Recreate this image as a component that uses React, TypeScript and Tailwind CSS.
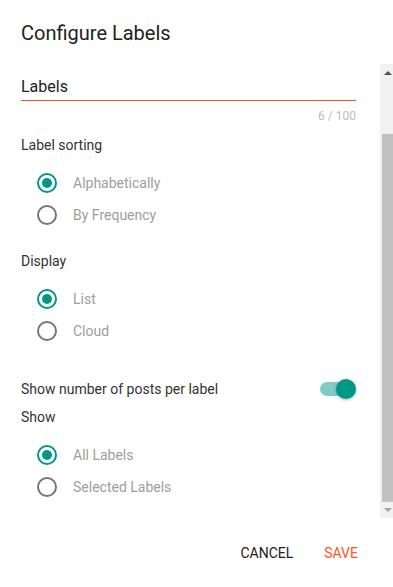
import React, { useState } from 'react';

const font = { fontFamily: 'Roboto, "Noto Sans", Arial, sans-serif' };

type RadioProps = { label: string; checked: boolean; onClick: () => void };

const Radio = ({ label, checked, onClick }: RadioProps) => (
  <button onClick={onClick} className="flex items-center h-[32px] pl-[16px] text-left cursor-pointer">
    <span
      className={`flex items-center justify-center w-[20px] h-[20px] rounded-full border-2 ${
        checked ? 'border-[#009688]' : 'border-[#757575]'
      }`}
    >
      {checked && <span className="w-[10px] h-[10px] rounded-full bg-[#009688]" />}
    </span>
    <span className="ml-[16px] text-[14px] leading-[20px] text-[#9e9e9e]">{label}</span>
  </button>
);

export default function App() {
  const [sorting, setSorting] = useState('alpha');
  const [display, setDisplay] = useState('list');
  const [show, setShow] = useState('all');
  const [counts, setCounts] = useState(true);

  return (
    <div style={font} className="w-[393px] h-[587px] bg-white flex flex-col overflow-hidden">
      <h1 className="pt-[21px] px-[21px] text-[20px] leading-[24px] font-normal text-[#212121]">Configure Labels</h1>

      <div className="mt-[17px] h-[458px] flex">
        <div className="flex-1 overflow-hidden pl-[21px] pr-[24px]">
          <div className="-mt-[10px] flex flex-col">
            <label className="text-[12px] leading-[12px] text-[#bdbdbd]">Title</label>
            <div className="mt-[11px] pb-[1px] border-b border-[#e8562a] text-[16px] leading-[24px] text-[#212121]">Labels</div>
            <div className="mt-[7px] text-right text-[12px] leading-[16px] text-[#bdbdbd]">6 / 100</div>

            <div className="mt-[11px] text-[14px] leading-[20px] text-[#333333]">Label sorting</div>
            <div className="mt-[12px] flex flex-col">
              <Radio label="Alphabetically" checked={sorting === 'alpha'} onClick={() => setSorting('alpha')} />
              <Radio label="By Frequency" checked={sorting === 'freq'} onClick={() => setSorting('freq')} />
            </div>

            <div className="mt-[20px] text-[14px] leading-[20px] text-[#333333]">Display</div>
            <div className="mt-[12px] flex flex-col">
              <Radio label="List" checked={display === 'list'} onClick={() => setDisplay('list')} />
              <Radio label="Cloud" checked={display === 'cloud'} onClick={() => setDisplay('cloud')} />
            </div>

            <div className="mt-[32px] flex items-center justify-between h-[20px]">
              <span className="text-[14px] leading-[20px] text-[#333333]">Show number of posts per label</span>
              <button
                onClick={() => setCounts((v) => !v)}
                className="relative w-[37px] h-[20px] flex items-center cursor-pointer"
              >
                <span className={`ml-[1px] w-[34px] h-[14px] rounded-full ${counts ? 'bg-[#80cbc4]' : 'bg-[#bdbdbd]'}`} />
                <span
                  className={`absolute top-0 w-[20px] h-[20px] rounded-full shadow-[0_1px_3px_rgba(0,0,0,0.3)] ${
                    counts ? 'right-0 bg-[#009688]' : 'left-0 bg-[#fafafa]'
                  }`}
                />
              </button>
            </div>

            <div className="mt-[8px] text-[14px] leading-[20px] text-[#333333]">Show</div>
            <div className="mt-[12px] flex flex-col">
              <Radio label="All Labels" checked={show === 'all'} onClick={() => setShow('all')} />
              <Radio label="Selected Labels" checked={show === 'selected'} onClick={() => setShow('selected')} />
            </div>
          </div>
        </div>

        {/* scrollbar */}
        <div className="mt-[2px] mb-[2px] w-[13px] bg-[#f1f1f1] flex flex-col">
          <div className="h-[17px] flex items-center justify-center pl-[2px]">
            <span className="w-0 h-0 border-l-[4px] border-r-[4px] border-b-[4px] border-l-transparent border-r-transparent border-b-[#505050]" />
          </div>
          <div className="h-[53px]" />
          <div className="ml-[2px] h-[368px] bg-[#c1c1c1]" />
          <div className="flex-1 flex items-center justify-center pl-[2px]">
            <span className="w-0 h-0 border-l-[4px] border-r-[4px] border-t-[4px] border-l-transparent border-r-transparent border-t-[#a3a3a3]" />
          </div>
        </div>
      </div>

      <div className="flex justify-end items-center h-[67px] pr-[27px] gap-[15px]">
        <button className="px-[8px] h-[36px] text-[14px] font-normal text-[#212121] cursor-pointer">CANCEL</button>
        <button className="px-[8px] h-[36px] text-[14px] font-normal text-[#ff5722] cursor-pointer">SAVE</button>
      </div>
    </div>
  );
}
